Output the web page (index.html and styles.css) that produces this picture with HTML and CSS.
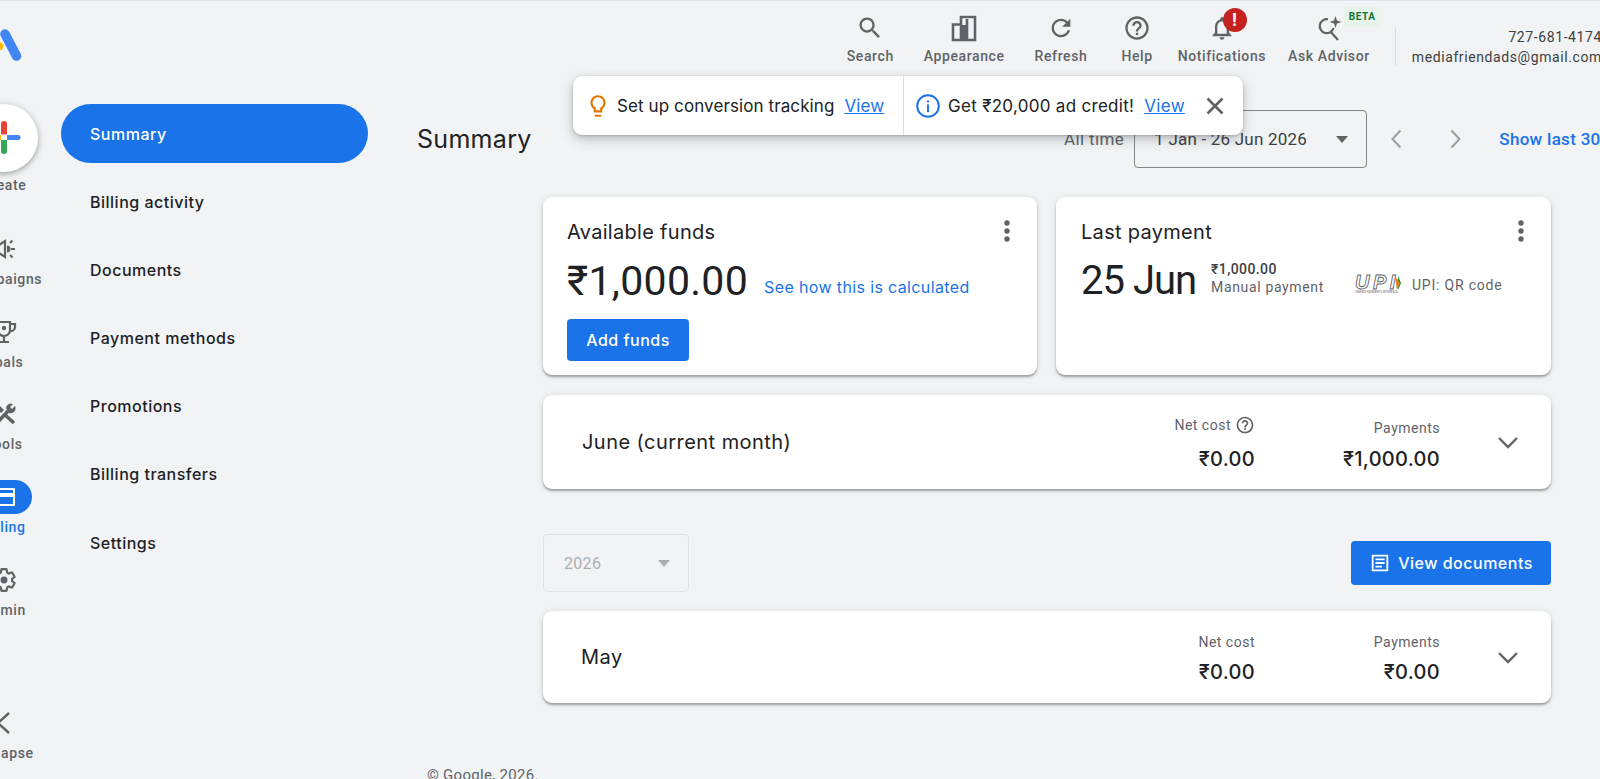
FILE: index.html
```html
<!DOCTYPE html>
<html lang="en">
<head>
<meta charset="utf-8">
<title>Billing summary</title>
<link rel="stylesheet" href="styles.css">
</head>
<body>
<div class="page">
  <header class="topbar">
    <svg class="logo" viewBox="0 0 42 40" width="42" height="40"><path d="M20 14l4 3-2 5h-2z" fill="#fbbc04"/><path d="M25 6 L36.500 28" stroke="#4285f4" stroke-width="9.500" stroke-linecap="round" fill="none"/></svg>
    <div class="actions">
      <div class="action a-search"><svg class="ico" viewBox="0 0 24 24"><path d="M15.500 14h-.79l-.28-.27C15.410 12.590 16 11.110 16 9.500 16 5.910 13.090 3 9.500 3S3 5.910 3 9.500 5.910 16 9.500 16c1.610 0 3.090-.59 4.230-1.570l.27.28v.79l5 4.990L20.490 19l-4.990-5zm-6 0C7.010 14 5 11.990 5 9.500S7.010 5 9.500 5 14 7.010 14 9.500 11.990 14 9.500 14z"/></svg><span>Search</span></div>
      <div class="action a-appearance"><svg class="ico" viewBox="0 0 28 28"><path d="M3 26V10.500h8V3h14v23zM11 10.500V26M17 5v21" fill="none" stroke="#5f6368" stroke-width="2.600"/><path d="M11 11h6v15h-6z"/></svg><span>Appearance</span></div>
      <div class="action a-refresh"><svg class="ico" viewBox="0 0 24 24"><path d="M17.650 6.350C16.200 4.900 14.210 4 12 4c-4.420 0-7.990 3.580-7.990 8s3.570 8 7.990 8c3.730 0 6.840-2.550 7.730-6h-2.080c-.82 2.330-3.040 4-5.650 4-3.310 0-6-2.690-6-6s2.690-6 6-6c1.660 0 3.140.69 4.220 1.780L13 11h7V4l-2.350 2.350z"/></svg><span>Refresh</span></div>
      <div class="action a-help"><svg class="ico" viewBox="0 0 24 24"><path d="M11 18h2v-2h-2v2zm1-16C6.480 2 2 6.480 2 12s4.480 10 10 10 10-4.480 10-10S17.520 2 12 2zm0 18c-4.410 0-8-3.590-8-8s3.590-8 8-8 8 3.590 8 8-3.590 8-8 8zm0-14c-2.210 0-4 1.790-4 4h2c0-1.100.9-2 2-2s2 .9 2 2c0 2-3 1.750-3 5h2c0-2.250 3-2.500 3-5 0-2.210-1.790-4-4-4z"/></svg><span>Help</span></div>
      <div class="action a-notif"><svg class="ico" viewBox="0 0 24 24"><path d="M12 22c1.100 0 2-.9 2-2h-4c0 1.100.9 2 2 2zm6-6v-5c0-3.070-1.630-5.640-4.500-6.320V4c0-.83-.67-1.500-1.500-1.500s-1.500.67-1.500 1.500v.68C7.640 5.360 6 7.920 6 11v5l-2 2v1h16v-1l-2-2zm-2 1H8v-6c0-2.480 1.510-4.500 4-4.500s4 2.020 4 4.500v6z"/></svg><span>Notifications</span><b class="badge">!</b></div>
      <div class="action a-advisor"><svg class="ico" viewBox="0 0 28 28"><path d="M13 5.300A7 7 0 1 0 18.500 14M15 17l8 9" fill="none" stroke="#5f6368" stroke-width="2.200"/><path d="M20.500 2l1.500 4.500 4.500 1.500-4.500 1.500-1.500 4.500-1.500-4.500-4.500-1.500 4.500-1.500z"/></svg><span>Ask Advisor</span><b class="beta">BETA</b></div>
      <div class="account"><div>727-681-4174</div><div>mediafriendads@gmail.com</div></div>
    </div>
  </header>

  <div class="workspace">
    <aside class="rail">
      <div class="rail-create">
        <div class="fab"><svg viewBox="0 0 68 68" width="68" height="68"><path d="M31 31h6v-10.500a3 3 0 0 0-6 0z" transform="translate(0 -.5)" fill="#ea4335"/><path d="M31 36h6v11a3 3 0 0 1-6 0z" fill="#34a853"/><path d="M37 31v5h11a2.500 2.500 0 0 0 0-5z" fill="#4285f4"/><path d="M31 31v5h-11a2.500 2.500 0 0 1 0-5z" fill="#fbbc04"/></svg></div>
        <span>Create</span>
      </div>
      <div class="rail-item"><div class="rail-icon"><svg viewBox="0 0 26 26"><path d="M3 9h5l6-4v16l-6-4H3z" fill="none" stroke="#5f6368" stroke-width="2.200"/><path d="M16 9.500v7a3.500 3.500 0 0 0 0-7z"/><path d="M19 7l2.500-2.500M20 13h4M19 19l2.500 2.500" stroke="#5f6368" stroke-width="2" fill="none"/></svg></div><span>Campaigns</span></div>
      <div class="rail-item"><div class="rail-icon"><svg viewBox="0 0 26 26"><path d="M7 3h12v8a6 6 0 0 1-12 0zM19 5h5v3a4 4 0 0 1-5 4M7 5H2v3a4 4 0 0 0 5 4M13 17v5M8 23h10" fill="none" stroke="#5f6368" stroke-width="2.200"/><circle cx="13" cy="9" r="2.200"/></svg></div><span>Goals</span></div>
      <div class="rail-item"><div class="rail-icon"><svg viewBox="0 0 26 26"><path d="M13 13l10 9" stroke="#5f6368" stroke-width="3.500" fill="none"/><path d="M5 23L18 9" stroke="#5f6368" stroke-width="3.500" fill="none"/><path d="M15 7a5 5 0 0 1 7-4l-3 3 2 2 3-3a5 5 0 0 1-6 7z"/><path d="M3 4l3-2 7 7-3 3z"/></svg></div><span>Tools</span></div>
      <div class="rail-item is-current"><div class="rail-icon"><svg viewBox="0 0 26 26"><path d="M3 4h20a1 1 0 0 1 1 1v16a1 1 0 0 1-1 1H3a1 1 0 0 1-1-1V5a1 1 0 0 1 1-1zm1 2v3h18V6zm0 7v7h18v-7z" fill="#fff" fill-rule="evenodd"/></svg></div><span>Billing</span></div>
      <div class="rail-item"><div class="rail-icon"><svg viewBox="0 0 24 24"><path d="M19.430 12.980c.04-.32.07-.64.07-.98s-.03-.66-.07-.98l2.110-1.650c.19-.15.24-.42.12-.64l-2-3.460c-.12-.22-.39-.3-.61-.22l-2.490 1c-.52-.4-1.080-.73-1.690-.98l-.38-2.650C14.460 2.180 14.250 2 14 2h-4c-.25 0-.46.18-.49.42l-.38 2.650c-.61.25-1.170.59-1.690.98l-2.490-1c-.23-.09-.49 0-.61.22l-2 3.460c-.13.22-.07.49.12.64l2.110 1.650c-.04.32-.07.65-.07.98s.03.66.07.98l-2.110 1.650c-.19.15-.24.42-.12.64l2 3.460c.12.22.39.3.61.22l2.490-1c.52.4 1.080.73 1.690.98l.38 2.650c.03.24.24.42.49.42h4c.25 0 .46-.18.49-.42l.38-2.650c.61-.25 1.170-.59 1.690-.98l2.490 1c.23.09.49 0 .61-.22l2-3.460c.12-.22.07-.49-.12-.64l-2.110-1.650z" fill="none" stroke="#5f6368" stroke-width="2"/><circle cx="12" cy="12" r="3.200"/></svg></div><span>Admin</span></div>
      <div class="rail-item rail-collapse"><div class="rail-icon"><svg viewBox="0 0 26 26"><path d="M18 3L7 13l11 10" fill="none" stroke="#5f6368" stroke-width="2.400"/></svg></div><span>Collapse</span></div>
    </aside>

    <nav class="subnav">
      <a class="subnav-item is-active">Summary</a>
      <a class="subnav-item">Billing activity</a>
      <a class="subnav-item">Documents</a>
      <a class="subnav-item">Payment methods</a>
      <a class="subnav-item">Promotions</a>
      <a class="subnav-item">Billing transfers</a>
      <a class="subnav-item">Settings</a>
    </nav>

    <main class="main">
      <div class="toolbar">
        <h1 class="title">Summary</h1>
        <div class="range">
          <span class="range-label">All time</span>
          <div class="range-select"><span>1 Jan - 26 Jun 2026</span><i class="caret"></i></div>
          <svg class="step" viewBox="0 0 24 24"><path d="M15.500 3.500L7.500 12l8 8.500" fill="none" stroke="#9aa0a6" stroke-width="2"/></svg>
          <svg class="step" viewBox="0 0 24 24"><path d="M8.500 3.500l8 8.500-8 8.500" fill="none" stroke="#9aa0a6" stroke-width="2"/></svg>
          <a class="range-link">Show last 30 days</a>
        </div>
      </div>

      <div class="content">
        <div class="card-row">
          <section class="card funds">
            <h2 class="card-title">Available funds</h2>
            <svg class="kebab" viewBox="0 0 6 22"><circle cx="3" cy="3" r="2.700"/><circle cx="3" cy="11" r="2.700"/><circle cx="3" cy="19" r="2.700"/></svg>
            <div class="funds-line"><span class="big">₹1,000.00</span><a class="calc">See how this is calculated</a></div>
            <button class="btn add">Add funds</button>
          </section>
          <section class="card payment">
            <h2 class="card-title">Last payment</h2>
            <svg class="kebab" viewBox="0 0 6 22"><circle cx="3" cy="3" r="2.700"/><circle cx="3" cy="11" r="2.700"/><circle cx="3" cy="19" r="2.700"/></svg>
            <div class="payment-line">
              <span class="big date">25 Jun</span>
              <div class="pay-detail"><strong>₹1,000.00</strong><span>Manual payment</span></div>
              <div class="upi">
                <div class="upi-logo"><div class="upi-mark"><span>UPI</span><svg viewBox="0 0 8 14" width="8" height="14"><path d="M0 0l3 7-3 7z" fill="#0f8a3c" transform="translate(3 0)"/><path d="M0 0l5 7-3 7z" fill="#ef7d1a"/></svg></div><small>UNIFIED PAYMENTS INTERFACE</small></div>
                <span class="upi-text">UPI: QR code</span>
              </div>
            </div>
          </section>
        </div>

        <section class="card month month-june">
          <div class="month-name">June (current month)</div>
          <div class="stat stat-net"><div class="stat-label">Net cost <svg class="q" viewBox="0 0 24 24"><path d="M11 18h2v-2h-2v2zm1-16C6.480 2 2 6.480 2 12s4.480 10 10 10 10-4.480 10-10S17.520 2 12 2zm0 18c-4.410 0-8-3.590-8-8s3.590-8 8-8 8 3.590 8 8-3.590 8-8 8zm0-14c-2.210 0-4 1.790-4 4h2c0-1.100.9-2 2-2s2 .9 2 2c0 2-3 1.750-3 5h2c0-2.250 3-2.500 3-5 0-2.210-1.790-4-4-4z"/></svg></div><div class="stat-value">₹0.00</div></div>
          <div class="stat stat-pay"><div class="stat-label">Payments</div><div class="stat-value">₹1,000.00</div></div>
          <svg class="chev" viewBox="0 0 24 24"><path d="M3 7l9 9 9-9" fill="none" stroke="#5f6368" stroke-width="2.400"/></svg>
        </section>

        <div class="year-row">
          <div class="year-select"><span>2026</span><i class="caret"></i></div>
          <button class="btn docs"><svg viewBox="0 0 24 24" width="22" height="22"><path d="M4 3h16a1 1 0 0 1 1 1v16a1 1 0 0 1-1 1H4a1 1 0 0 1-1-1V4a1 1 0 0 1 1-1zm1 2v14h14V5zm2 2h10v2H7zm0 4h10v2H7zm0 4h7v2H7z" fill="#fff" fill-rule="evenodd"/></svg>View documents</button>
        </div>

        <section class="card month month-may">
          <div class="month-name">May</div>
          <div class="stat stat-net"><div class="stat-label">Net cost</div><div class="stat-value">₹0.00</div></div>
          <div class="stat stat-pay"><div class="stat-label">Payments</div><div class="stat-value">₹0.00</div></div>
          <svg class="chev" viewBox="0 0 24 24"><path d="M3 7l9 9 9-9" fill="none" stroke="#5f6368" stroke-width="2.400"/></svg>
        </section>
      </div>
      <footer class="foot">© Google, 2026.</footer>
    </main>
  </div>

  <div class="toast">
    <div class="toast-part part-one">
      <svg class="bulb" viewBox="0 0 24 24"><path d="M9 21c0 .55.45 1 1 1h4c.55 0 1-.45 1-1v-1H9v1zm3-19C8.140 2 5 5.140 5 9c0 2.380 1.190 4.470 3 5.740V17c0 .55.45 1 1 1h6c.55 0 1-.45 1-1v-2.260c1.810-1.270 3-3.360 3-5.740 0-3.860-3.140-7-7-7zm2.850 11.100l-.85.6V16h-4v-2.300l-.85-.6C7.800 12.160 7 10.630 7 9c0-2.760 2.240-5 5-5s5 2.240 5 5c0 1.630-.8 3.160-2.150 4.100z" fill="#e37400"/></svg>
      <span>Set up conversion tracking</span><a>View</a>
    </div>
    <div class="toast-part part-two">
      <svg class="info" viewBox="0 0 24 24"><circle cx="12" cy="12" r="10.800" fill="none" stroke="#1a73e8" stroke-width="2"/><path d="M11 10.500h2V18h-2zM11 6.500h2v2h-2z" fill="#1a73e8"/></svg>
      <span>Get ₹20,000 ad credit!</span><a>View</a>
      <svg class="close" viewBox="0 0 18 18"><path d="M1.500 1.500l15 15M16.500 1.500l-15 15" fill="none" stroke="#5f6368" stroke-width="2.600"/></svg>
    </div>
  </div>
</div>
</body>
</html>
```

FILE: styles.css
```css
* { box-sizing: border-box; }
html, body { margin: 0; height: 100%; }
body { overflow: hidden; background: #f1f3f5; font-family: Roboto, "Noto Sans", sans-serif; color: #202124; }
.page { position: relative; width: 1600px; height: 779px; overflow: hidden; border-top: 1px solid #dfe1e8; }

/* top bar */
.topbar { display: flex; width: 1602px; height: 103px; }
.logo { margin: 27px 0 0 -20px; flex: none; }
.actions { display: flex; align-items: flex-start; margin-left: auto; padding-top: 13px; }
.action { position: relative; display: flex; flex-direction: column; align-items: center; color: #5f6368; font-size: 14px; font-weight: 500; letter-spacing: .6px; line-height: 20px; }
.ico { width: 28px; height: 28px; fill: #5f6368; margin-bottom: 4px; }
.a-appearance { margin-left: 30px; }
.a-refresh { margin-left: 30px; }
.a-help { margin-left: 34px; }
.a-notif { margin-left: 25px; }
.a-advisor { margin-left: 22px; }
.badge { position: absolute; top: -6px; left: 45px; width: 24px; height: 24px; border-radius: 50%; background: #c5221f; color: #fff; font-size: 18px; line-height: 24px; text-align: center; }
.beta { position: absolute; top: -7px; left: 56px; width: 36px; height: 20px; background: #e6f4ea; color: #137333; border-radius: 2px; font-size: 10px; line-height: 20px; text-align: center; letter-spacing: .6px; }
.account { margin: 13px 0 0 25px; padding-left: 16px; border-left: 1px solid #dadce0; height: 39px; text-align: right; font-size: 14px; line-height: 20px; letter-spacing: .6px; color: #3c4043; }

/* workspace */
.workspace { display: flex; height: 675px; }

/* rail */
.rail { width: 61px; flex: none; display: flex; flex-direction: column; }
.rail-create, .rail-item { width: 90px; margin-left: -41px; display: flex; flex-direction: column; align-items: center; font-size: 14px; font-weight: 500; letter-spacing: .6px; color: #5f6368; line-height: 20px; flex: none; }
.rail-create { margin-bottom: 37px; }
.fab { width: 68px; height: 68px; border-radius: 50%; background: #fff; box-shadow: 0 2px 5px rgba(60,64,67,.35), 0 1px 8px rgba(60,64,67,.15); margin-bottom: 3px; }
.fab svg { display: block; }
.rail-item { height: 57px; margin-bottom: 25.700px; }
.rail-icon { width: 56px; height: 34px; margin-bottom: 3px; border-radius: 17px; display: flex; align-items: center; justify-content: center; }
.rail-icon svg { width: 26px; height: 26px; fill: #5f6368; }
.is-current { color: #1a73e8; }
.is-current .rail-icon { background: #1a73e8; }
.rail-collapse { margin-top: auto; margin-bottom: 16px; }

/* sub nav */
.subnav { width: 307px; flex: none; display: flex; flex-direction: column; gap: 9.200px; }
.subnav-item { height: 59px; display: flex; align-items: center; padding-left: 29px; border-radius: 30px; font-family: Inter, Roboto, sans-serif; font-size: 16px; letter-spacing: .5px; font-weight: 500; color: #202124; }
.is-active { background: #1a73e8; color: #fff; }

/* main */
.main { width: 1274px; flex: none; }
.toolbar { display: flex; align-items: center; justify-content: space-between; margin-top: 6px; height: 58px; padding-left: 49px; }
.title { margin: 0; font-family: Inter, Roboto, sans-serif; font-size: 25px; letter-spacing: .3px; font-weight: 400; }
.range { display: flex; align-items: center; }
.range-label { font-size: 17px; color: #5f6368; margin-right: 10px; letter-spacing: .4px; }
.range-select { width: 233px; height: 58px; border: 1px solid #80868b; border-radius: 4px; display: flex; align-items: center; justify-content: space-between; padding: 0 18px 0 19px; font-size: 17px; letter-spacing: .2px; color: #3c4043; }
.caret { width: 0; height: 0; border: 6.500px solid transparent; border-top: 7px solid #5f6368; border-bottom: 0; }
.step { width: 24px; height: 24px; margin-left: 18px; }
.step + .step { margin-left: 34px; }
.range-link { margin-left: 32px; font-size: 17px; font-weight: 500; color: #1a73e8; letter-spacing: .3px; white-space: nowrap; }

.content { width: 1008px; margin: 29px 0 0 175px; }
.card-row { display: flex; gap: 19px; }
.card { position: relative; background: #fff; border-radius: 9px; box-shadow: 0 2px 2px rgba(60,64,67,.4), 0 1px 6px rgba(60,64,67,.14); }
.funds { width: 494px; height: 178px; padding: 21px 24px; }
.payment { width: 495px; height: 178px; padding: 21px 25px; }
.card-title { margin: 0; font-family: Inter, Roboto, sans-serif; font-size: 20px; letter-spacing: .3px; font-weight: 400; line-height: 28px; }
.kebab { position: absolute; top: 23px; right: 27px; width: 6px; height: 22px; fill: #5f6368; }
.funds-line { display: flex; align-items: flex-start; margin-top: 11px; height: 48px; }
.big { font-size: 41px; letter-spacing: .3px; line-height: 48px; color: #202124; }
.date { font-size: 40px; letter-spacing: -1px; }
.calc { margin: 20px 0 0 16px; font-family: Inter, Roboto, sans-serif; font-size: 16px; line-height: 20px; letter-spacing: .37px; color: #1a73e8; }
.btn { border: 0; background: #1a73e8; color: #fff; border-radius: 4px; font-family: Inter, Roboto, sans-serif; font-size: 16px; font-weight: 500; letter-spacing: .5px; }
.add { display: block; width: 122px; height: 42px; margin-top: 14px; }
.payment-line { display: flex; align-items: flex-start; margin-top: 11px; height: 48px; }
.pay-detail { display: flex; flex-direction: column; margin: 3px 0 0 15px; font-size: 14px; line-height: 18px; color: #5f6368; letter-spacing: .65px; }
.pay-detail strong { color: #3c4043; font-weight: 500; letter-spacing: .4px; }
.upi { display: flex; align-items: center; margin: 18px 0 0 31px; }
.upi-logo { width: 48px; display: flex; flex-direction: column; color: #5f6368; }
.upi-mark { display: flex; align-items: center; height: 15px; }
.upi-mark span { font: italic 700 20px/15px "Liberation Sans", sans-serif; letter-spacing: 3.500px; color: #fff; -webkit-text-stroke: .9px #5f6368; }
.upi-mark svg { margin-left: -4px; flex: none; }
.upi-logo small { font-size: 3px; line-height: 4px; white-space: nowrap; }
.upi-text { margin-left: 9px; font-size: 14px; color: #5f6368; letter-spacing: .8px; }

.month { display: flex; align-items: stretch; }
.month-june { height: 94px; margin-top: 20px; padding-left: 39px; }
.month-may { height: 92px; margin-top: 19px; padding-left: 38px; }
.month-name { font-family: Inter, Roboto, sans-serif; font-size: 20px; letter-spacing: .45px; align-self: center; flex: 1; }
.stat { text-align: right; display: flex; flex-direction: column; align-items: flex-end; }
.stat-net { width: 181px; }
.stat-pay { width: 185px; }
.stat-label { font-size: 14px; line-height: 20px; color: #5f6368; letter-spacing: .5px; display: flex; align-items: center; gap: 4px; }
.stat-value { font-family: Inter, Roboto, sans-serif; font-size: 20px; font-weight: 500; letter-spacing: .3px; line-height: 24px; color: #202124; margin-top: 8px; }
.month-june .stat-net { padding-top: 20px; }
.month-june .stat-pay { padding-top: 23px; }
.month-june .stat-net .stat-value { margin-top: 12px; }
.month-june .stat-pay .stat-value { margin-top: 9px; }
.month-may .stat { padding-top: 21px; }
.q { width: 20px; height: 20px; fill: #5f6368; }
.chev { width: 24px; height: 24px; align-self: center; margin: 1px 31px 0 56px; }

.year-row { display: flex; align-items: center; justify-content: space-between; margin-top: 45px; height: 58px; }
.year-select { width: 146px; height: 58px; border: 1px solid #e0e2e6; border-radius: 4px; display: flex; align-items: center; justify-content: space-between; padding: 0 18px 0 20px; font-size: 16px; letter-spacing: .3px; color: #aaaeb3; }
.year-select .caret { border-top-color: #aaaeb3; }
.docs { width: 200px; height: 44px; display: flex; align-items: center; justify-content: center; gap: 7px; padding-right: 6px; }

.foot { margin: 62px 0 0 59px; font-size: 15px; line-height: 20px; color: #5f6368; letter-spacing: .3px; }

/* toast */
.toast { position: absolute; left: 573px; top: 75px; width: 670px; height: 59px; display: flex; background: #fff; border-radius: 9px; box-shadow: 0 4px 12px rgba(60,64,67,.3), 0 1px 3px rgba(60,64,67,.25); font-family: Inter, Roboto, sans-serif; font-size: 17px; letter-spacing: .1px; color: #202124; }
.toast-part { display: flex; align-items: center; }
.toast a { color: #1a73e8; text-decoration: underline; margin-left: 10px; }
.part-one { width: 331px; padding-left: 12px; border-right: 1px solid #dadce0; }
.part-two { flex: 1; padding-left: 12px; letter-spacing: .3px; }
.bulb { width: 26px; height: 26px; margin-right: 6px; }
.info { width: 24px; height: 24px; margin-right: 8px; }
.close { width: 18px; height: 18px; margin-left: 21px; }
```
